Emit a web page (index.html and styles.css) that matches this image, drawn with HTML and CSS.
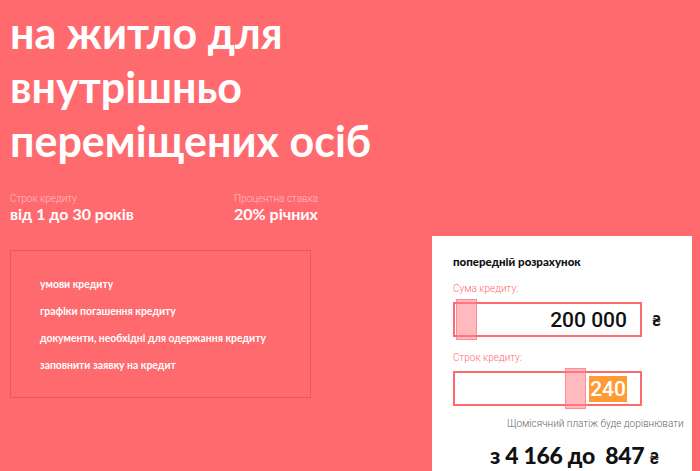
FILE: index.html
```html
<!DOCTYPE html>
<html lang="uk">
<head>
<meta charset="utf-8">
<link rel="stylesheet" href="styles.css">
</head>
<body>
<div class="page">
  <h1 class="title">на житло для<br>внутрішньо<br>переміщених осіб</h1>
  <div class="stats">
    <div class="stat">
      <div class="stat-label">Строк кредиту</div>
      <div class="stat-value">від 1 до 30 років</div>
    </div>
    <div class="stat">
      <div class="stat-label">Процентна ставка</div>
      <div class="stat-value">20% річних</div>
    </div>
  </div>
  <div class="lower">
    <div class="links">
      <a class="link">умови кредиту</a>
      <a class="link">графіки погашення кредиту</a>
      <a class="link">документи, необхідні для одержання кредиту</a>
      <a class="link">заповнити заявку на кредит</a>
    </div>
    <div class="card">
      <div class="card-title">попередній розрахунок</div>
      <div class="field-label">Сума кредиту:</div>
      <div class="field-row">
        <div class="field">
          <span class="handle handle-a"></span>
          <span class="amount">200 000</span>
        </div>
        <span class="cur">₴</span>
      </div>
      <div class="field-label">Строк кредиту:</div>
      <div class="field-row">
        <div class="field">
          <span class="handle handle-b"></span>
          <span class="term">240</span>
        </div>
      </div>
      <div class="note">Щомісячний платіж буде дорівнювати</div>
      <div class="result">з 4 166 до&nbsp; 847 <span class="result-cur">₴</span></div>
    </div>
  </div>
</div>
</body>
</html>
```
FILE: styles.css
```css
* { box-sizing: border-box; }
html, body { margin: 0; padding: 0; }
body {
  background: #ff6a6f;
  width: 700px;
  height: 471px;
  overflow: hidden;
  font-family: "Lato", "Liberation Sans", sans-serif;
}
.page { padding: 6px 0 0 10px; }
.title {
  margin: 0;
  color: #fff;
  font-size: 43px;
  line-height: 54px;
  font-weight: 700;
  letter-spacing: 0;
}
.stats {
  display: flex;
  margin-top: 25px;
}
.stat { width: 224px; }
.stat-label {
  font-family: "Roboto", sans-serif;
  font-weight: 300;
  font-size: 10px;
  color: #ffc0c0;
  line-height: 12px;
}
.stat-value {
  color: #fff;
  font-weight: 700;
  font-size: 16px;
  line-height: 18px;
  margin-top: 0;
}
.lower {
  display: flex;
  align-items: flex-start;
  margin-top: 13px;
}
.links {
  margin-top: 14px;
  width: 301px;
  height: 148px;
  border: 1px solid #e15a60;
  padding: 26px 0 0 29px;
  display: flex;
  flex-direction: column;
  gap: 13px;
}
.link {
  color: #fff;
  font-weight: 700;
  font-size: 10.4px;
  line-height: 14px;
  letter-spacing: 0;
}
.card {
  margin-left: 121px;
  width: 260px;
  height: 235px;
  background: #fff;
  padding: 19px 0 0 21px;
}
.card-title {
  font-weight: 900;
  font-size: 11.5px;
  color: #111;
  line-height: 14px;
}
.field-label {
  font-family: "Roboto", sans-serif;
  font-weight: 300;
  font-size: 10px;
  color: #ff6a6f;
  line-height: 12px;
  margin-top: 14px;
}
.field-label + .field-row { margin-top: 7px; }
.field-row + .field-label { margin-top: 15px; }
.field-row {
  display: flex;
  align-items: center;
}
.field {
  position: relative;
  width: 189px;
  height: 35px;
  border: 2px solid #ff6a6f;
  display: flex;
  align-items: center;
  justify-content: flex-end;
  padding-right: 13px;
}
.handle {
  position: absolute;
  top: -5px;
  width: 21px;
  height: 41px;
  background: rgba(255, 130, 140, 0.55);
  border: 1px solid rgba(255, 110, 120, 0.6);
}
.handle-a { left: 1px; }
.handle-b { left: 110px; }
.amount {
  font-family: "Roboto", sans-serif;
  font-size: 21px;
  font-weight: 500;
  color: #111;
}
.term {
  font-family: "Roboto", sans-serif;
  font-size: 21px;
  font-weight: 500;
  color: #fff;
  background: #ff9a35;
  padding: 1px 1px;
  line-height: 24px;
}
.cur {
  margin-left: 10px;
  font-weight: 900;
  font-size: 15px;
  color: #111;
}
.note {
  font-family: "Roboto", sans-serif;
  font-weight: 300;
  font-size: 10px;
  color: #666;
  margin-top: 12px;
  padding-left: 54px;
  line-height: 12px;
}
.result {
  margin-top: 13px;
  padding-left: 37px;
  font-weight: 900;
  font-size: 23px;
  color: #111;
  letter-spacing: -0.3px;
  line-height: 24px;
}
.result-cur { font-size: 16px; }
```
